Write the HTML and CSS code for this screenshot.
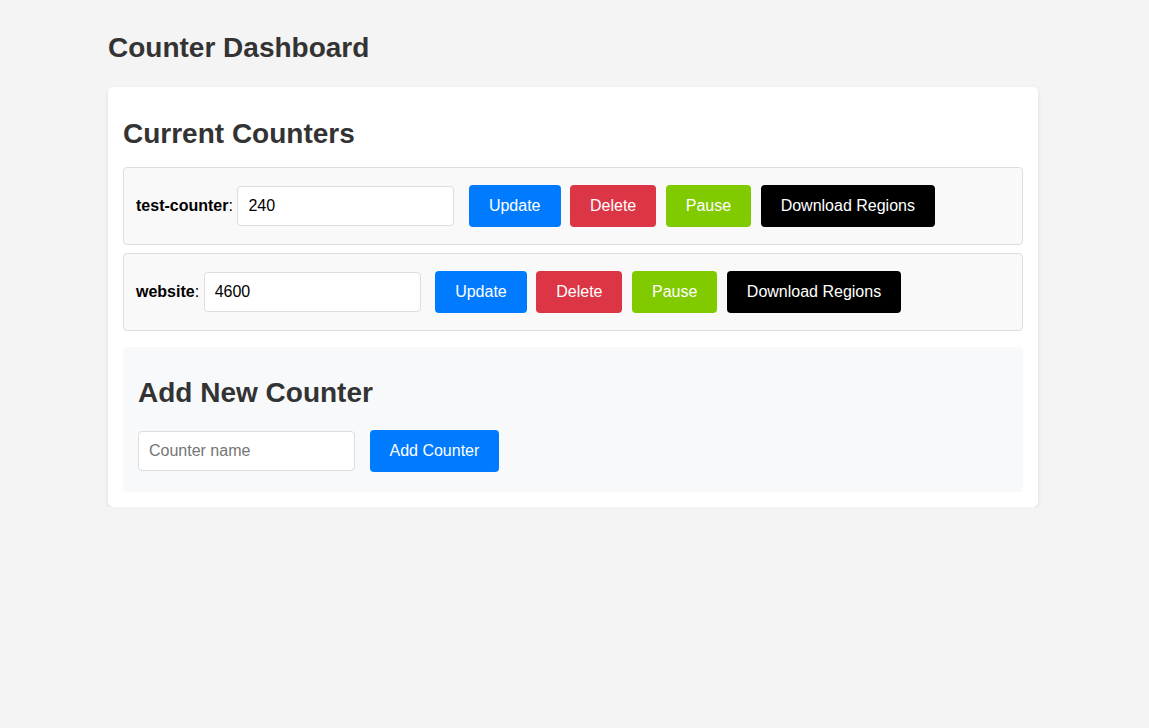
FILE: index.html
```html
<!DOCTYPE html>
<html lang="en">
<head>
<meta charset="utf-8">
<title>Counter Dashboard</title>
<link rel="stylesheet" href="styles.css">
</head>
<body>
<div class="page">
  <h1 class="page-title">Counter Dashboard</h1>
  <div class="card">
    <h2 class="section-title">Current Counters</h2>
    <div class="counter-list">
      <div class="counter-item">
        <span class="counter-label"><strong>test-counter</strong>:</span>
        <input class="counter-input" type="number" value="240">
        <button class="btn btn-update">Update</button>
        <button class="btn btn-delete">Delete</button>
        <button class="btn btn-pause">Pause</button>
        <button class="btn btn-download">Download Regions</button>
      </div>
      <div class="counter-item">
        <span class="counter-label"><strong>website</strong>:</span>
        <input class="counter-input" type="number" value="4600">
        <button class="btn btn-update">Update</button>
        <button class="btn btn-delete">Delete</button>
        <button class="btn btn-pause">Pause</button>
        <button class="btn btn-download">Download Regions</button>
      </div>
    </div>
    <div class="add-section">
      <h2 class="section-title add-title">Add New Counter</h2>
      <div class="add-row">
        <input class="counter-input" type="text" placeholder="Counter name">
        <button class="btn btn-update">Add Counter</button>
      </div>
    </div>
  </div>
</div>
</body>
</html>
```

FILE: styles.css
```css
html, body {
  margin: 0;
  padding: 0;
}
body {
  background: #f4f4f4;
  font-family: "Liberation Sans", Arial, sans-serif;
  color: #333;
  padding-right: 3px;
}
.page {
  width: 930px;
  margin: 0 auto;
  padding-top: 32px;
}
.page-title {
  font-size: 28px;
  font-weight: bold;
  line-height: 32px;
  color: #333;
  margin: 0 0 23px 0;
}
.card {
  background: #fff;
  border-radius: 5px;
  box-shadow: 0 2px 4px rgba(0, 0, 0, 0.1);
  padding: 15px 15px 15px 15px;
}
.section-title {
  font-size: 28px;
  font-weight: bold;
  line-height: 32px;
  color: #333;
  margin: 16px 0 17px 0;
}
.counter-item {
  display: flex;
  align-items: center;
  background: #f9f9f9;
  border: 1px solid #ddd;
  border-radius: 4px;
  padding: 17px 12px;
  margin-bottom: 8px;
  color: #000;
  font-size: 16px;
}
.counter-item:last-child {
  margin-bottom: 0;
}
.counter-label {
  white-space: nowrap;
}
.counter-input {
  box-sizing: border-box;
  width: 217px;
  height: 40px;
  padding: 10px;
  border: 1px solid #ddd;
  border-radius: 4px;
  font-family: "Liberation Sans", Arial, sans-serif;
  font-size: 16px;
  color: #000;
  background: #fff;
  margin: 0 10px 0 4.5px;
  outline: none;
  -moz-appearance: textfield;
}
.counter-input::-webkit-outer-spin-button,
.counter-input::-webkit-inner-spin-button {
  -webkit-appearance: none;
  margin: 0;
}
.btn {
  height: 42px;
  padding: 0 20px;
  border: none;
  border-radius: 4px;
  font-family: "Liberation Sans", Arial, sans-serif;
  font-size: 16px;
  color: #fff;
  cursor: pointer;
  margin: 0 5px 0 4.5px;
  white-space: nowrap;
}
.btn-update { background: #007bff; }
.btn-delete { background: #dc3545; }
.btn-pause { background: #82ca00; }
.btn-download { background: #000; }
.add-section {
  background: #f8f9fa;
  border-radius: 4px;
  padding: 15px 15px 20px 15px;
  margin-top: 16px;
}
.add-title {
  margin: 15px 0 21px 0;
}
.add-row {
  display: flex;
  align-items: center;
}
.add-row .counter-input {
  margin-left: 0;
}
.add-row .counter-input::placeholder {
  color: #757575;
}
```
